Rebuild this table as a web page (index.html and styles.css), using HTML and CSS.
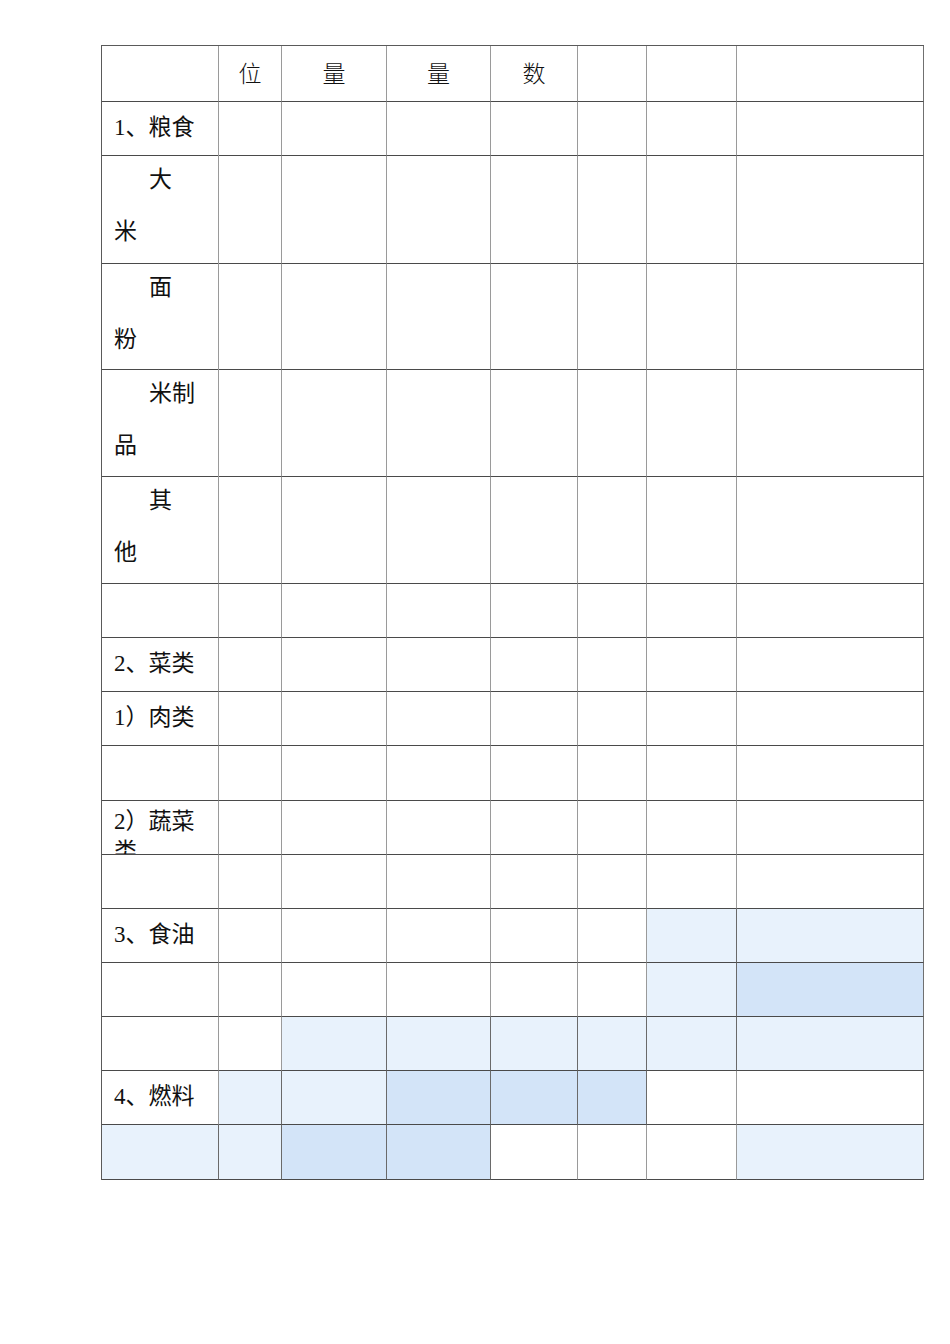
FILE: index.html
```html
<!DOCTYPE html>
<html lang="zh">
<head>
<meta charset="utf-8">
<link rel="stylesheet" href="styles.css">
</head>
<body>
<div class="sheet">
  <div class="c hd"></div><div class="c hd">位</div><div class="c hd">量</div><div class="c hd">量</div><div class="c hd">数</div><div class="c hd"></div><div class="c hd"></div><div class="c hd"></div>

  <div class="c lbl">1、粮食</div><div class="c"></div><div class="c"></div><div class="c"></div><div class="c"></div><div class="c"></div><div class="c"></div><div class="c"></div>

  <div class="c two"><span class="ind">大</span><br>米</div><div class="c"></div><div class="c"></div><div class="c"></div><div class="c"></div><div class="c"></div><div class="c"></div><div class="c"></div>

  <div class="c two"><span class="ind">面</span><br>粉</div><div class="c"></div><div class="c"></div><div class="c"></div><div class="c"></div><div class="c"></div><div class="c"></div><div class="c"></div>

  <div class="c two"><span class="ind">米制</span><br>品</div><div class="c"></div><div class="c"></div><div class="c"></div><div class="c"></div><div class="c"></div><div class="c"></div><div class="c"></div>

  <div class="c two"><span class="ind">其</span><br>他</div><div class="c"></div><div class="c"></div><div class="c"></div><div class="c"></div><div class="c"></div><div class="c"></div><div class="c"></div>

  <div class="c"></div><div class="c"></div><div class="c"></div><div class="c"></div><div class="c"></div><div class="c"></div><div class="c"></div><div class="c"></div>

  <div class="c lbl">2、菜类</div><div class="c"></div><div class="c"></div><div class="c"></div><div class="c"></div><div class="c"></div><div class="c"></div><div class="c"></div>

  <div class="c lbl">1）肉类</div><div class="c"></div><div class="c"></div><div class="c"></div><div class="c"></div><div class="c"></div><div class="c"></div><div class="c"></div>

  <div class="c"></div><div class="c"></div><div class="c"></div><div class="c"></div><div class="c"></div><div class="c"></div><div class="c"></div><div class="c"></div>

  <div class="c tight">2）蔬菜<br>类</div><div class="c"></div><div class="c"></div><div class="c"></div><div class="c"></div><div class="c"></div><div class="c"></div><div class="c"></div>

  <div class="c"></div><div class="c"></div><div class="c"></div><div class="c"></div><div class="c"></div><div class="c"></div><div class="c"></div><div class="c"></div>

  <div class="c lbl">3、食油</div><div class="c"></div><div class="c"></div><div class="c"></div><div class="c"></div><div class="c"></div><div class="c lt"></div><div class="c lt"></div>

  <div class="c"></div><div class="c"></div><div class="c"></div><div class="c"></div><div class="c"></div><div class="c"></div><div class="c lt"></div><div class="c dk"></div>

  <div class="c"></div><div class="c"></div><div class="c lt"></div><div class="c lt"></div><div class="c lt"></div><div class="c lt"></div><div class="c lt"></div><div class="c lt"></div>

  <div class="c lbl">4、燃料</div><div class="c lt"></div><div class="c lt"></div><div class="c dk"></div><div class="c dk"></div><div class="c dk"></div><div class="c"></div><div class="c"></div>

  <div class="c lt"></div><div class="c lt"></div><div class="c dk"></div><div class="c dk"></div><div class="c"></div><div class="c"></div><div class="c"></div><div class="c lt"></div>
</div>
</body>
</html>
```

FILE: styles.css
```css
html, body {
  margin: 0;
  padding: 0;
  background: #ffffff;
}

body {
  font-family: "Liberation Serif", "Noto Sans CJK SC", serif;
  font-size: 23px;
  color: #111111;
}

.sheet {
  margin: 45px 0 0 101px;
  display: grid;
  width: 823px;
  grid-template-columns: 117px 63px 105px 104px 87px 69px 90px 187px;
  grid-template-rows: 56px 54px 108px 106px 107px 107px 54px 54px 54px 55px 54px 54px 54px 54px 54px 54px 55px;
  border-top: 1px solid #5a5a5a;
  border-left: 1px solid #5a5a5a;
  box-sizing: border-box;
}

.c {
  box-sizing: border-box;
  border-right: 1px solid #9a9a9a;
  border-bottom: 1px solid #4a4a4a;
  overflow: hidden;
}

.c:nth-child(8n) {
  border-right-color: #707070;
}

.hd {
  display: flex;
  align-items: center;
  justify-content: center;
  padding-bottom: 3px;
  font-weight: 300;
}

.lbl {
  display: flex;
  align-items: center;
  padding-left: 12px;
  padding-bottom: 8px;
  white-space: nowrap;
}

.two {
  padding-left: 12px;
  line-height: 52px;
  padding-top: 0;
  margin-top: -2px;
}

.ind {
  padding-left: 35px;
}

.tight {
  padding: 6px 0 0 12px;
  line-height: 30px;
  white-space: nowrap;
}

.lt {
  background: #e8f2fc;
}

.dk {
  background: #d3e4f8;
}

.lt, .dk {
  border-right-color: #6a6a6a;
}
```
